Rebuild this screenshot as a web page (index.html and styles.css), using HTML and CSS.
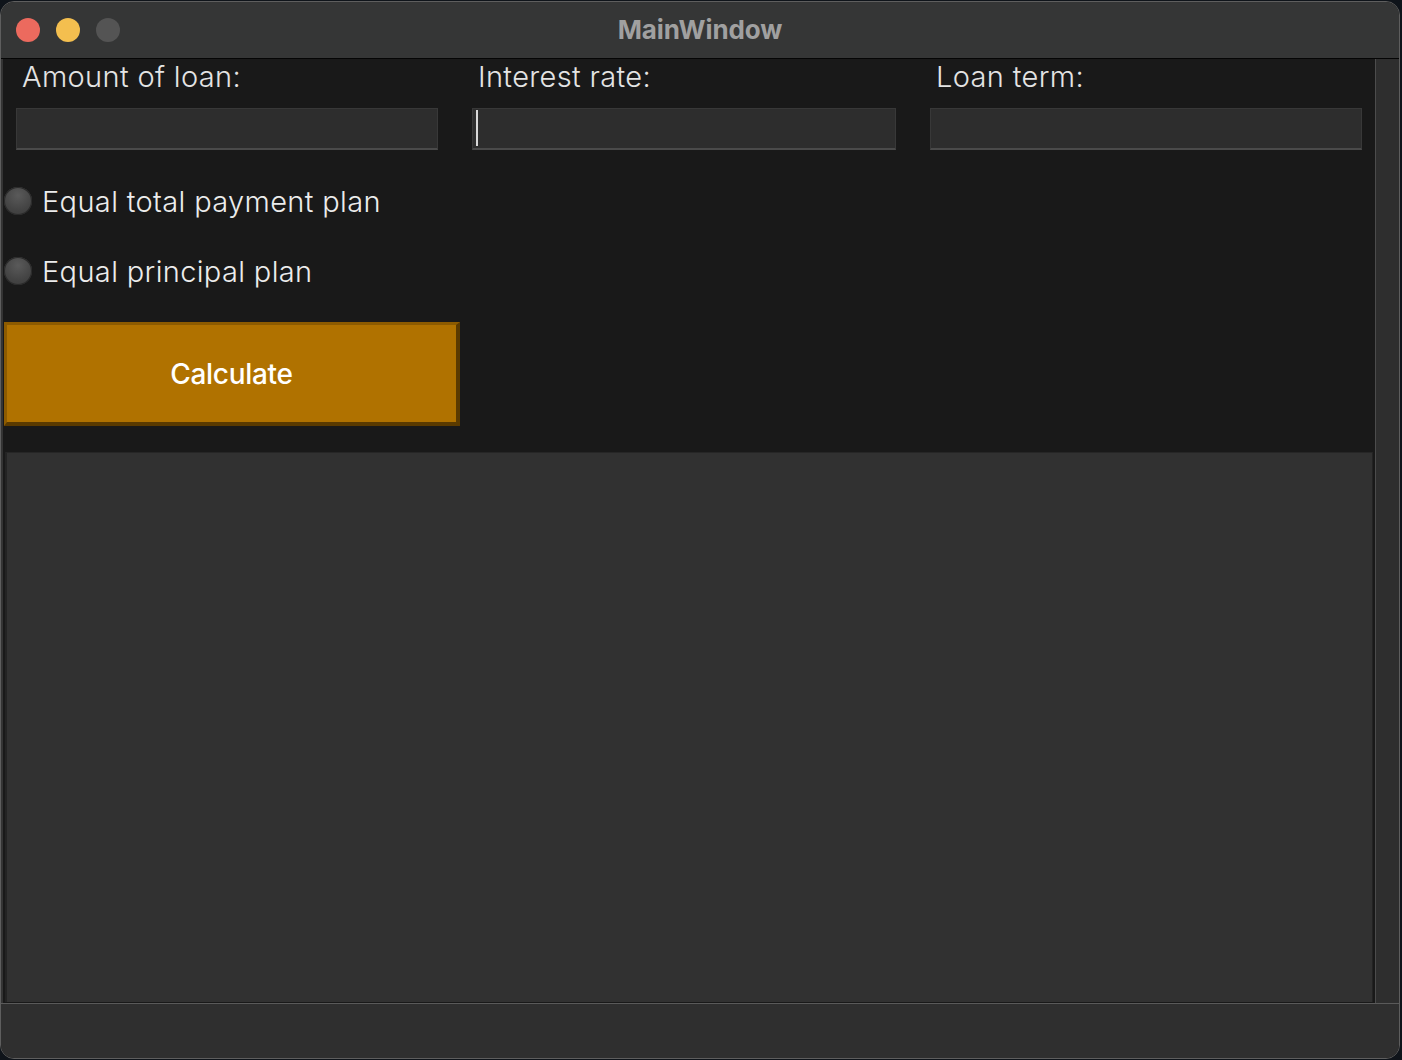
FILE: index.html
```html
<!DOCTYPE html>
<html>
<head>
<meta charset="utf-8">
<title>MainWindow</title>
<link rel="stylesheet" href="styles.css">
</head>
<body>
<div class="window">
  <div class="titlebar">
    <div class="lights">
      <span class="light red"></span>
      <span class="light yellow"></span>
      <span class="light gray"></span>
    </div>
    <div class="title">MainWindow</div>
  </div>
  <div class="main">
    <div class="content">
      <div class="fields">
        <div class="field f1">
          <label class="label">Amount of loan:</label>
          <div class="input"></div>
        </div>
        <div class="field f2">
          <label class="label">Interest rate:</label>
          <div class="input"><span class="caret"></span></div>
        </div>
        <div class="field f3">
          <label class="label">Loan term:</label>
          <div class="input"></div>
        </div>
      </div>
      <div class="radios">
        <div class="radio"><span class="dot"></span><span class="rtext">Equal total payment plan</span></div>
        <div class="radio"><span class="dot"></span><span class="rtext">Equal principal plan</span></div>
      </div>
      <button class="calc">Calculate</button>
      <div class="panel"></div>
    </div>
    <div class="strip"></div>
  </div>
  <div class="statusbar"></div>
</div>
</body>
</html>
```

FILE: styles.css
```css
html, body {
  margin: 0;
  padding: 0;
  background: #0f141a;
}
body {
  width: 1402px;
  height: 1060px;
  overflow: hidden;
  font-family: Inter, "Noto Sans", sans-serif;
}
.window {
  box-sizing: border-box;
  width: 1400px;
  height: 1058px;
  margin-top: 1px;
  border: 1px solid #5e5e5e;
  border-radius: 14px;
  overflow: hidden;
  display: flex;
  flex-direction: column;
  background: #191919;
}
.titlebar {
  position: relative;
  height: 56px;
  flex: none;
  background: #353636;
  border-bottom: 1px solid #050505;
  display: flex;
  align-items: center;
  justify-content: center;
}
.lights {
  position: absolute;
  left: 15px;
  top: 16px;
  display: flex;
  gap: 16px;
}
.light {
  width: 24px;
  height: 24px;
  border-radius: 50%;
}
.red { background: #ec6a5e; }
.yellow { background: #f4bf4f; }
.gray { background: #545454; }
.title {
  color: #a0a0a0;
  font-weight: 700;
  font-size: 26px;
  letter-spacing: -0.1px;
  margin-top: -2px;
}
.main {
  flex: 1;
  display: flex;
  min-height: 0;
}
.content {
  flex: 1;
  background: #191919;
  border-left: 2px solid #343434;
  display: flex;
  flex-direction: column;
}
.strip {
  width: 23px;
  flex: none;
  background: #2e2e2e;
  border-left: 1px solid #4c4c4c;
}
.fields {
  display: flex;
  padding: 0 11px 0 13px;
  gap: 34px;
}
.field {
  display: flex;
  flex-direction: column;
}
.f1 { width: 422px; }
.f2 { width: 424px; }
.f3 { width: 432px; }
.label {
  color: #e4e4e4;
  font-size: 29px;
  font-weight: 300;
  line-height: 36px;
  height: 36px;
  padding-left: 6px;
  letter-spacing: 0.35px;
  margin-bottom: 13px;
}
.input {
  box-sizing: border-box;
  height: 42px;
  background: #2d2d2d;
  border: 1px solid #383838;
  border-bottom: 2px solid #4a4a4a;
  position: relative;
}
.caret {
  position: absolute;
  left: 3px;
  top: 1px;
  width: 2px;
  height: 36px;
  background: #d8d8d8;
}
.radios {
  display: flex;
  flex-direction: column;
  margin-top: 37px;
  gap: 42px;
}
.radio {
  display: flex;
  align-items: center;
  height: 28px;
  padding-left: 1px;
}
.dot {
  width: 28px;
  height: 28px;
  border-radius: 50%;
  background: radial-gradient(circle at 50% 30%, #5a5a5a, #444 60%, #3a3a3a);
  box-shadow: inset 0 0 0 1px #2a2a2a;
  flex: none;
}
.rtext {
  color: #ececec;
  font-size: 29px;
  font-weight: 300;
  margin-left: 10px;
  letter-spacing: 0.35px;
}
.calc {
  box-sizing: border-box;
  margin: 37px 0 0 1px;
  width: 456px;
  height: 104px;
  background: #b07200;
  border-style: solid;
  border-width: 3px 4px 4px 3px;
  border-color: #8d5b00 #5a3a00 #5a3a00 #8d5b00;
  color: #ffffff;
  font-family: Inter, "Noto Sans", sans-serif;
  font-size: 28px;
  font-weight: 500;
  letter-spacing: -0.3px;
  padding: 0;
}
.panel {
  margin: 26px 2px 1px 2px;
  flex: 1;
  background: #313131;
  border-left: 2px solid #232323;
  border-top: 1px solid #262626;
  border-right: 1px solid #232323;
}
.statusbar {
  height: 54px;
  flex: none;
  background: #2f2f2f;
  border-top: 1px solid #5a5a5a;
}
```
